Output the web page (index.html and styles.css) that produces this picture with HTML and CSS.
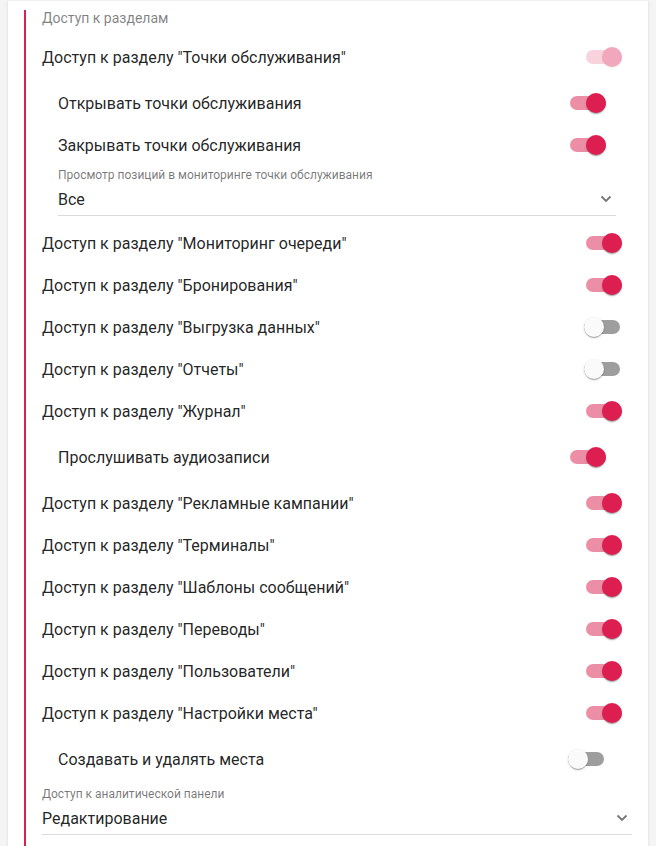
FILE: index.html
```html
<!DOCTYPE html>
<html lang="ru">
<head>
<meta charset="utf-8">
<link rel="stylesheet" href="styles.css">
</head>
<body>
<div class="card">
  <div class="section">
    <div class="section-title">Доступ к разделам</div>

    <div class="row"><span class="label">Доступ к разделу "Точки обслуживания"</span><span class="toggle on disabled"><span class="track"></span><span class="thumb"></span></span></div>
    <div class="group">
      <div class="row"><span class="label">Открывать точки обслуживания</span><span class="toggle on"><span class="track"></span><span class="thumb"></span></span></div>
      <div class="row"><span class="label">Закрывать точки обслуживания</span><span class="toggle on"><span class="track"></span><span class="thumb"></span></span></div>
      <div class="select">
        <div class="select-label">Просмотр позиций в мониторинге точки обслуживания</div>
        <div class="select-box"><span class="select-value">Все</span><svg class="chevron" width="12" height="8" viewBox="0 0 12 8"><polyline points="1.5,1.5 6,6 10.5,1.5" fill="none" stroke="#757575" stroke-width="1.8"/></svg></div>
      </div>
    </div>

    <div class="row"><span class="label">Доступ к разделу "Мониторинг очереди"</span><span class="toggle on"><span class="track"></span><span class="thumb"></span></span></div>
    <div class="row"><span class="label">Доступ к разделу "Бронирования"</span><span class="toggle on"><span class="track"></span><span class="thumb"></span></span></div>
    <div class="row"><span class="label">Доступ к разделу "Выгрузка данных"</span><span class="toggle off"><span class="track"></span><span class="thumb"></span></span></div>
    <div class="row"><span class="label">Доступ к разделу "Отчеты"</span><span class="toggle off"><span class="track"></span><span class="thumb"></span></span></div>
    <div class="row"><span class="label">Доступ к разделу "Журнал"</span><span class="toggle on"><span class="track"></span><span class="thumb"></span></span></div>
    <div class="group">
      <div class="row"><span class="label">Прослушивать аудиозаписи</span><span class="toggle on"><span class="track"></span><span class="thumb"></span></span></div>
    </div>
    <div class="row"><span class="label">Доступ к разделу "Рекламные кампании"</span><span class="toggle on"><span class="track"></span><span class="thumb"></span></span></div>
    <div class="row"><span class="label">Доступ к разделу "Терминалы"</span><span class="toggle on"><span class="track"></span><span class="thumb"></span></span></div>
    <div class="row"><span class="label">Доступ к разделу "Шаблоны сообщений"</span><span class="toggle on"><span class="track"></span><span class="thumb"></span></span></div>
    <div class="row"><span class="label">Доступ к разделу "Переводы"</span><span class="toggle on"><span class="track"></span><span class="thumb"></span></span></div>
    <div class="row"><span class="label">Доступ к разделу "Пользователи"</span><span class="toggle on"><span class="track"></span><span class="thumb"></span></span></div>
    <div class="row"><span class="label">Доступ к разделу "Настройки места"</span><span class="toggle on"><span class="track"></span><span class="thumb"></span></span></div>
    <div class="group">
      <div class="row"><span class="label">Создавать и удалять места</span><span class="toggle off"><span class="track"></span><span class="thumb"></span></span></div>
    </div>
    <div class="select top-select">
      <div class="select-label">Доступ к аналитической панели</div>
      <div class="select-box"><span class="select-value">Редактирование</span><svg class="chevron" width="12" height="8" viewBox="0 0 12 8"><polyline points="1.5,1.5 6,6 10.5,1.5" fill="none" stroke="#757575" stroke-width="1.8"/></svg></div>
    </div>
  </div>
</div>
</body>
</html>
```

FILE: styles.css
```css
html, body {
  margin: 0;
  padding: 0;
}
html {
  overflow: hidden;
}
body {
  background: #f5f5f5;
  padding: 0 8px;
  font-family: Roboto, "Noto Sans", Arial, sans-serif;
  color: rgba(0, 0, 0, 0.87);
}
.card {
  background: #fff;
  box-shadow: 0 1px 3px rgba(0, 0, 0, 0.12);
  border-top: 1px solid #efefef;
  padding: 9px 16px 0 16px;
}
.section {
  border-left: 2px solid #dc1e50;
  padding: 0 0 20px 16px;
}
.section-title {
  font-size: 14px;
  line-height: 16px;
  color: rgba(0, 0, 0, 0.5);
  margin-bottom: 10px;
}
.row {
  display: flex;
  align-items: center;
  justify-content: space-between;
  height: 42px;
  font-size: 16px;
}
.group {
  padding: 4px 16px;
}
.toggle {
  position: relative;
  width: 36px;
  height: 20px;
  margin-right: 10px;
  flex: none;
}
.toggle .track {
  position: absolute;
  left: 0;
  top: 3px;
  width: 36px;
  height: 14px;
  border-radius: 7px;
  background: rgba(0, 0, 0, 0.38);
}
.toggle .thumb {
  position: absolute;
  top: 0;
  left: 0;
  width: 20px;
  height: 20px;
  border-radius: 50%;
  background: #fafafa;
  box-shadow: 0 2px 1px -1px rgba(0,0,0,.2), 0 1px 1px 0 rgba(0,0,0,.14), 0 1px 3px 0 rgba(0,0,0,.12);
}
.toggle.off {
  margin-right: 12px;
}
.toggle.on .track {
  background: rgba(220, 30, 80, 0.5);
}
.toggle.on .thumb {
  left: 16px;
  background: #dc1e50;
}
.toggle.disabled {
  opacity: 0.38;
}
.toggle.disabled .thumb {
  box-shadow: 0 1px 2px rgba(0,0,0,.15);
}
.select {
  padding-top: 1px;
  padding-bottom: 2px;
}
.top-select {
  padding-top: 2px;
}
.select-label {
  font-size: 12px;
  line-height: 16px;
  color: rgba(0, 0, 0, 0.54);
}
.select-box {
  display: flex;
  align-items: center;
  justify-content: space-between;
  height: 33px;
  border-bottom: 1px solid rgba(0, 0, 0, 0.14);
  box-sizing: border-box;
  font-size: 16px;
}
.chevron {
  margin-right: 4px;
}
```
